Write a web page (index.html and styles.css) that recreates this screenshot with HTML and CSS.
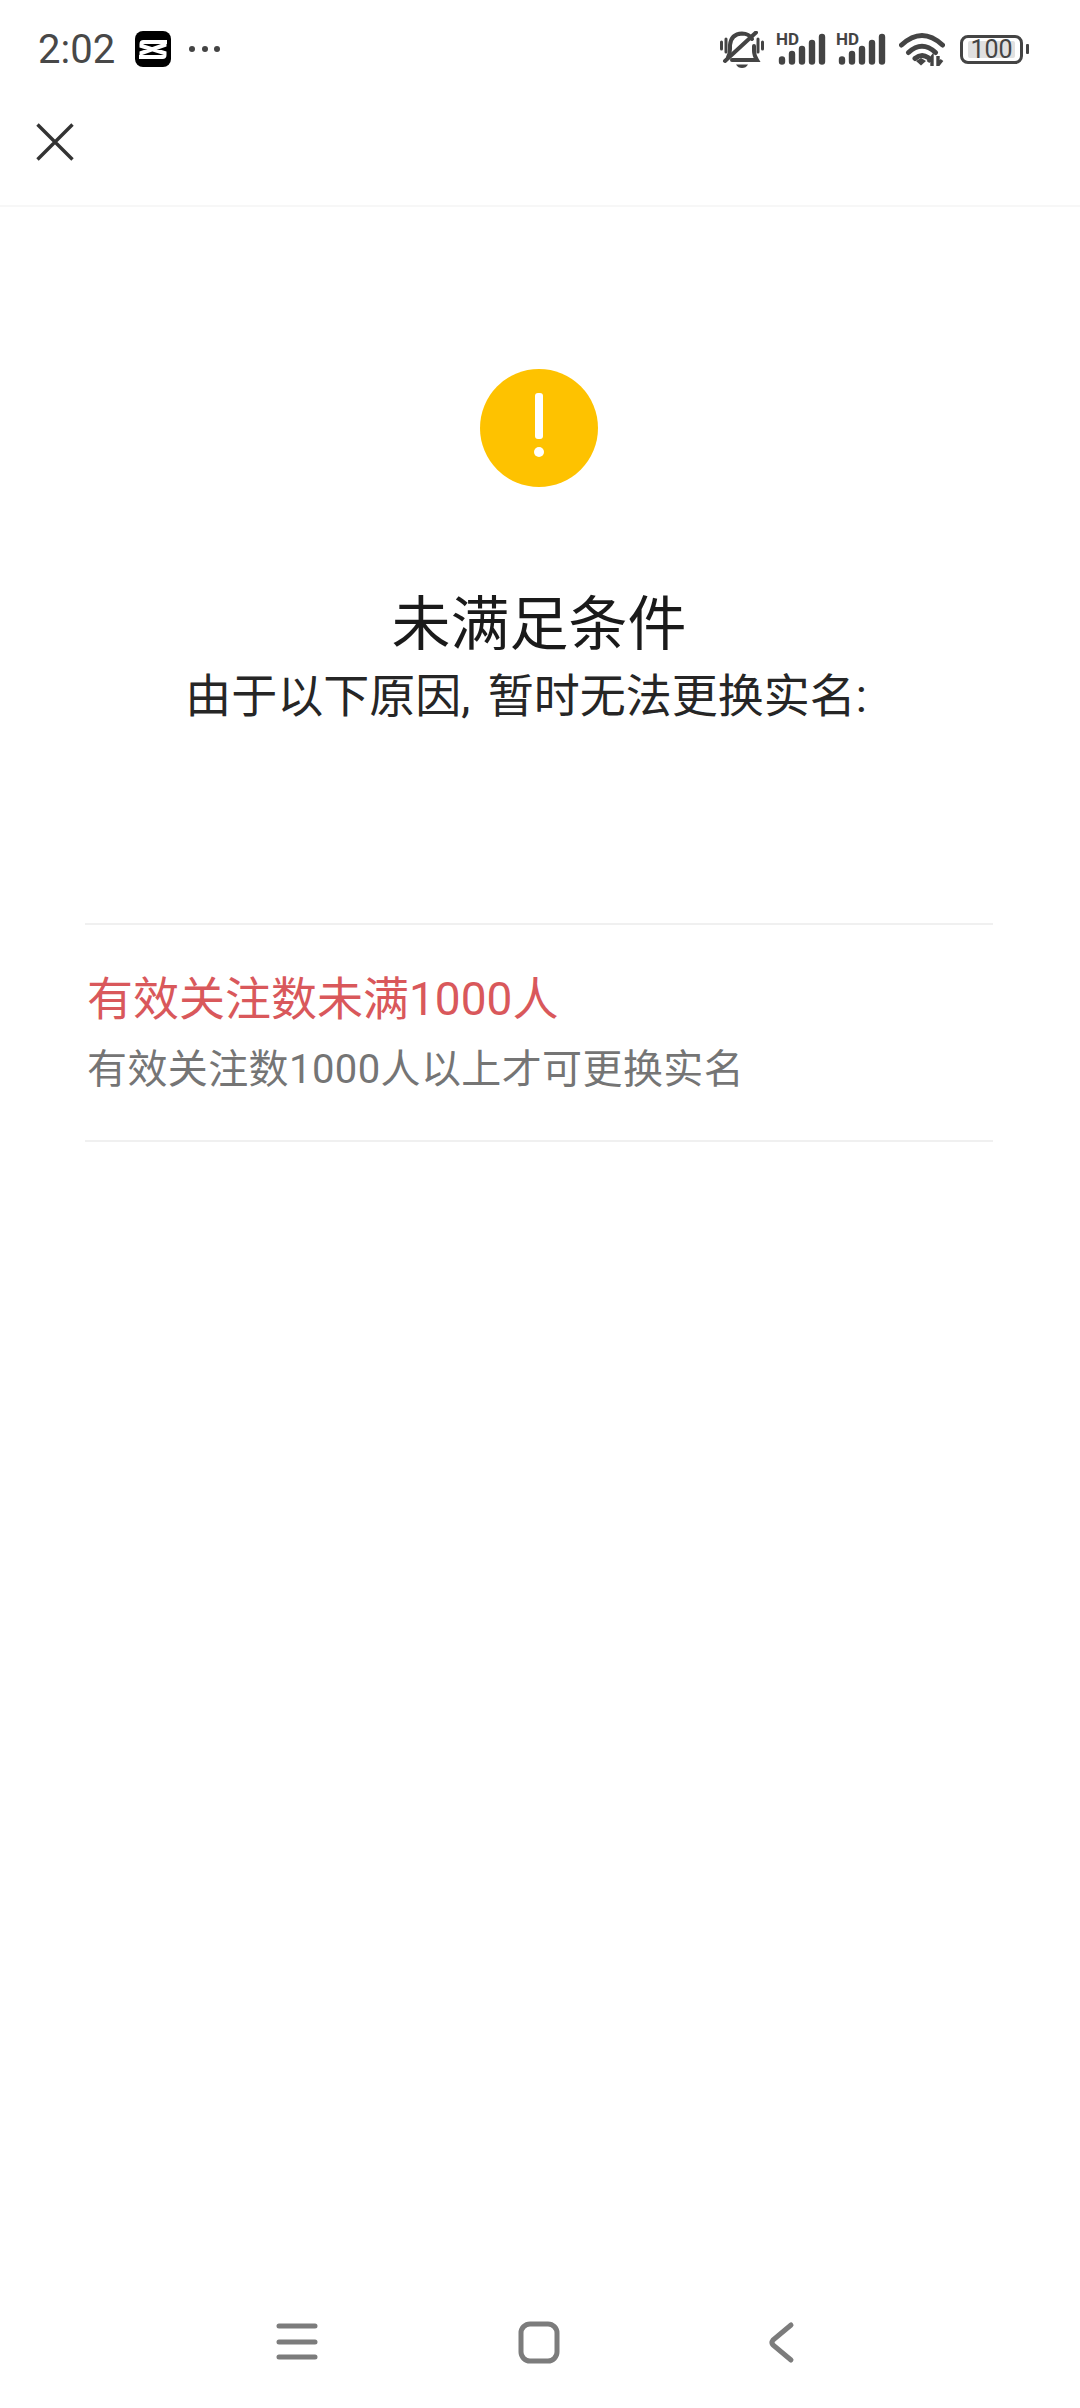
FILE: index.html
```html
<!DOCTYPE html>
<html lang="zh-CN">
<head>
    <meta charset="UTF-8">
    <title>未满足条件</title>
    <link rel="stylesheet" href="styles.css">
</head>
<body>
    <div class="page">
        <div class="status-bar">
            <span class="time">2:02</span>
            <svg class="app-icon" viewBox="0 0 36 36">
                <rect width="36" height="36" rx="8" fill="#000"/>
                <path d="M32 11 H8.500 Q6.500 11 6.500 13 V15 L29.500 22 V24 Q29.500 26 27.500 26 H4 M29.500 10 V14 L6.500 22 V24 Q6.500 26 8.500 26" fill="none" stroke="#fff" stroke-width="4"/>
            </svg>
            <div class="dots"><i></i><i></i><i></i></div>

            <div class="status-right">
                <svg class="bell" viewBox="0 0 44 37">
                    <path d="M8 26 Q10 23 10 18 L10 14 Q11 3 22 2.500 Q29 2.500 32 8 M34 15 L34 20 Q34 24 37 29 L12 29" fill="none" stroke="#444" stroke-width="4" stroke-linecap="round"/>
                    <path d="M36 1.500 L5 30" fill="none" stroke="#444" stroke-width="4" stroke-linecap="round"/>
                    <path d="M16 33.500 H28 Q26 37 22 37 Q18 37 16 33.500 Z" fill="#444"/>
                    <path d="M1.500 11 V18 M6 8 V21 M38 8 V21 M42.500 11 V18" stroke="#444" stroke-width="3" stroke-linecap="round"/>
                </svg>
                <svg class="signal" viewBox="0 -6 50 38">
                    <text x="0" y="12" class="hd">HD</text>
                    <path d="M6 26.500 V28.500 M16 21 V28.500 M26 16 V28.500 M36 10 V28.500 M46 4 V28.500" fill="none" stroke="#444" stroke-width="6.400" stroke-linecap="round"/>
                </svg>
                <svg class="signal" viewBox="0 -6 50 38">
                    <text x="0" y="12" class="hd">HD</text>
                    <path d="M6 26.500 V28.500 M16 21 V28.500 M26 16 V28.500 M36 10 V28.500 M46 4 V28.500" fill="none" stroke="#444" stroke-width="6.400" stroke-linecap="round"/>
                </svg>
                <svg class="wifi" viewBox="0 0 46 34">
                    <path d="M2.500 13 Q23 -6 43.500 13 M9.500 20.500 Q23 8 36.500 20.500 M16 26.500 Q22.500 21 29 25.500" fill="none" stroke="#444" stroke-width="5" stroke-linecap="round"/>
                    <path d="M17 29 L22 26 L27 29 L22 33.500 Z" fill="#444"/>
                    <path d="M33 34 V25 L29 30 M39 24 V33 L43 28" fill="none" stroke="#444" stroke-width="3.400"/>
                </svg>
                <div class="battery">
                    <div class="battery-box"><span class="battery-level">100</span></div>
                    <i class="battery-nub"></i>
                </div>
            </div>
        </div>

        <div class="top-bar">
            <svg class="close" viewBox="0 0 38 38">
                <path d="M1.500 1.500 L36.500 36.500 M36.500 1.500 L1.500 36.500" stroke="#333" stroke-width="3.400"/>
            </svg>
        </div>

        <div class="content">
            <div class="warn-circle">
                <i class="warn-stem"></i>
                <i class="warn-dot"></i>
            </div>
            <h1 class="title">未满足条件</h1>
            <p class="subtitle">由于以下原因, 暂时无法更换实名:</p>

            <div class="reason">
                <div class="reason-title">有效关注数未满1000人</div>
                <div class="reason-desc">有效关注数1000人以上才可更换实名</div>
            </div>
        </div>

        <div class="nav-bar">
            <svg class="nav-icon" viewBox="0 0 60 44">
                <path d="M12 5 H48 M12 21 H48 M12 36 H48" stroke="#7c7c7c" stroke-width="5" stroke-linecap="round"/>
            </svg>
            <svg class="nav-icon" viewBox="0 0 60 44">
                <rect x="12" y="3" width="36" height="37" rx="9" fill="none" stroke="#7c7c7c" stroke-width="5"/>
            </svg>
            <svg class="nav-icon" viewBox="0 0 60 44">
                <path d="M40 4 L22 19 Q20 21.500 22 24 L40 39" fill="none" stroke="#7c7c7c" stroke-width="5" stroke-linecap="round"/>
            </svg>
        </div>
    </div>
</body>
</html>
```

FILE: styles.css
```css
html, body { margin: 0; padding: 0; background: #fff; }
body { font-family: Roboto, "Noto Sans CJK SC", sans-serif; }
.page { width: 1080px; height: 2408px; display: flex; flex-direction: column; overflow: hidden; }

.status-bar { height: 98px; display: flex; align-items: center; padding: 0 51px 0 38px; flex-shrink: 0; }
.time { font-size: 40px; color: #484848; width: 97px; }
.app-icon { width: 36px; height: 36px; display: block; }
.dots { display: flex; gap: 6.500px; margin-left: 18px; }
.dots i { width: 6px; height: 6px; border-radius: 50%; background: #444; display: block; }
.status-right { margin-left: auto; display: flex; align-items: center; }
.bell { width: 44px; height: 37px; display: block; margin-right: 12px; }
.signal { width: 50px; height: 38px; display: block; margin: 0 10px 6px 0; }
.hd { font-family: Roboto, sans-serif; font-size: 17px; font-weight: 700; fill: #444; }
.wifi { width: 46px; height: 34px; display: block; margin: 0 15px 0 3px; }

.battery { display: flex; align-items: center; gap: 3px; }
.battery-box { width: 63px; height: 29px; box-sizing: border-box; border: 3px solid #444; border-radius: 8px; padding: 3px 5px; display: flex; }
.battery-level { flex: 1; background: #e0e0e0; border-radius: 2px; color: #444; font-size: 25px; line-height: 17px; text-align: center; }
.battery-nub { width: 3px; height: 10px; background: #444; border-radius: 1px; display: block; }

.top-bar { height: 109px; padding: 25px 0 0 36px; box-sizing: border-box; border-bottom: 2px solid #f7f7f7; flex-shrink: 0; }
.close { width: 38px; height: 38px; display: block; }

.content { display: flex; flex-direction: column; align-items: center; }
.warn-circle { width: 118px; height: 118px; border-radius: 50%; background: #fec200; margin: 162px 2px 0 0; display: flex; flex-direction: column; align-items: center; padding-top: 24px; box-sizing: border-box; }
.warn-stem { width: 8px; height: 46px; background: #fff; border-radius: 3px; display: block; }
.warn-dot { width: 10px; height: 10px; background: #fff; border-radius: 50%; margin-top: 8px; display: block; }
.title { font-size: 59px; line-height: 70px; font-weight: 400; color: #1a1a1a; margin: 103px 2px 0 0; }
.subtitle { font-size: 46px; line-height: 60px; color: #262626; margin: 6px 0 0; padding-right: 28px; word-spacing: 6px; }

.reason { width: 908px; margin: 197px 2px 0 0; padding: 44px 0 45px; box-sizing: border-box; border-top: 2px solid #f0f0f0; border-bottom: 2px solid #f0f0f0; }
.reason-title { font-size: 46px; line-height: 60px; color: #d9585b; padding-left: 2px; }
.reason-desc { font-size: 40px; line-height: 50px; color: #757575; margin-top: 16px; padding-left: 2px; letter-spacing: 0.400px; }

.nav-bar { margin-top: auto; margin-bottom: 43px; padding-left: 267px; display: flex; gap: 182px; flex-shrink: 0; }
.nav-icon { width: 60px; height: 44px; display: block; }
```
